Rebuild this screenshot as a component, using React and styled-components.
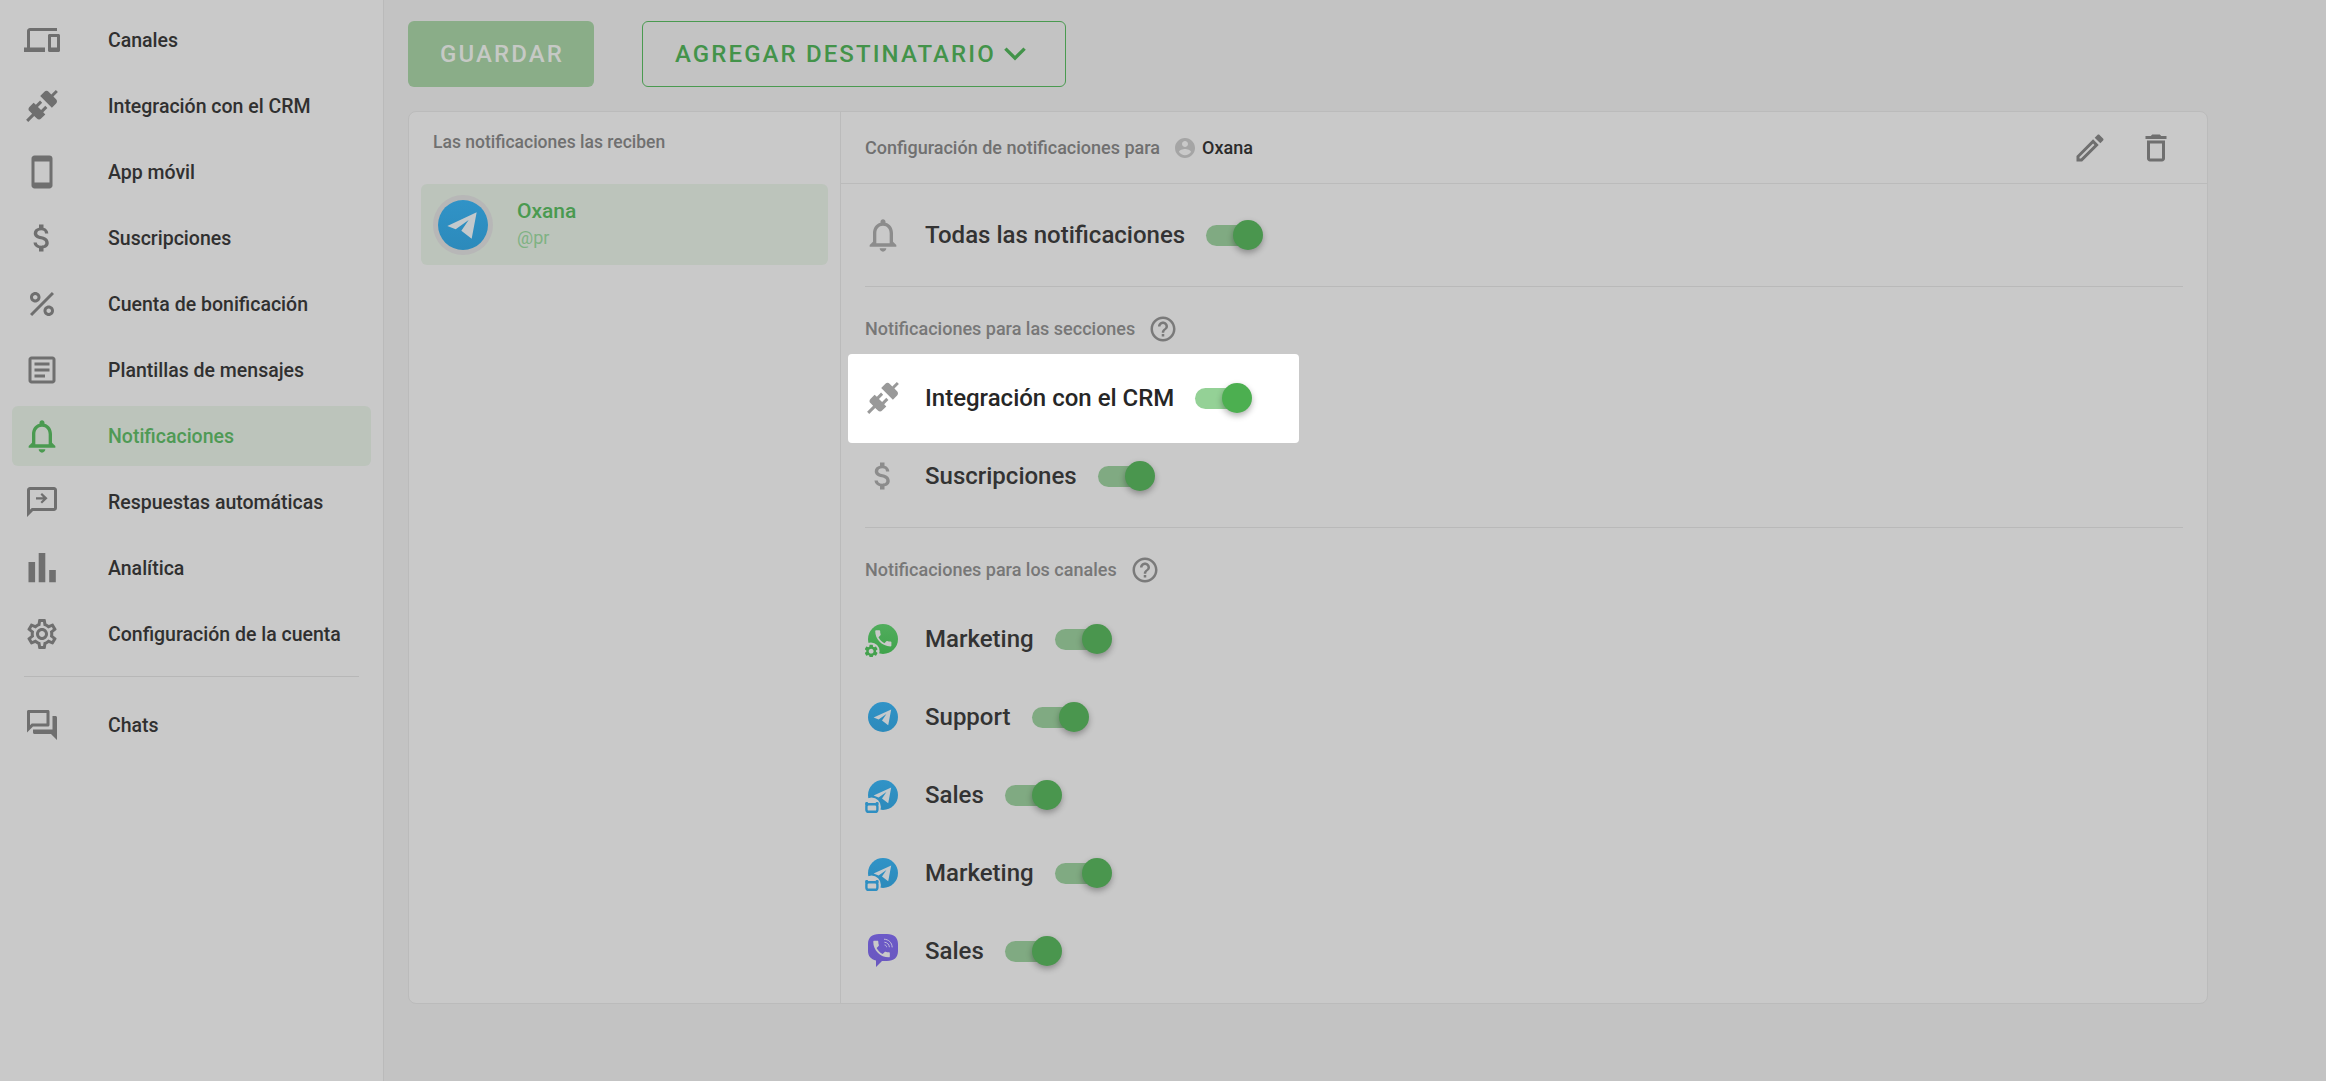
import React from "react";
import styled, { createGlobalStyle } from "styled-components";

const Global = createGlobalStyle`
  html, body { margin: 0; padding: 0; background: #c3c3c3; }
  body { font-family: Roboto, "Liberation Sans", sans-serif; overflow: hidden; }
`;

const P = {
  devices: "M4 6h18V4H4c-1.1 0-2 .9-2 2v11H0v3h14v-3H4V6zm19 2h-6c-.55 0-1 .45-1 1v10c0 .55.45 1 1 1h6c.55 0 1-.45 1-1V9c0-.55-.45-1-1-1zm-1 9h-4v-7h4v7z",
  plug: "M21.4 7.5C22.2 8.3 22.2 9.6 21.4 10.3L18.6 13.1L10.8 5.3L13.6 2.5C14.4 1.7 15.7 1.7 16.4 2.5L18.2 4.3L21.2 1.3L22.6 2.7L19.6 5.7L21.4 7.5M15.6 13.3L14.2 11.9L11.4 14.7L9.3 12.6L12.1 9.8L10.7 8.4L7.9 11.2L6.4 9.8L3.6 12.6C2.8 13.4 2.8 14.7 3.6 15.4L5.4 17.2L1.4 21.2L2.8 22.6L6.8 18.6L8.6 20.4C9.4 21.2 10.7 21.2 11.4 20.4L14.2 17.6L12.8 16.2L15.6 13.3Z",
  phone: "M17 1.01L7 1c-1.1 0-2 .9-2 2v18c0 1.1.9 2 2 2h10c1.1 0 2-.9 2-2V3c0-1.1-.9-1.99-2-1.99zM17 19H7V5h10v14z",
  money: "M11.8 10.9c-2.27-.59-3-1.2-3-2.15 0-1.09 1.01-1.85 2.7-1.85 1.78 0 2.44.85 2.5 2.1h2.21c-.07-1.72-1.12-3.3-3.21-3.81V3h-3v2.16c-1.94.42-3.5 1.68-3.5 3.61 0 2.31 1.91 3.46 4.7 4.13 2.5.6 3 1.48 3 2.41 0 .69-.49 1.79-2.7 1.79-2.06 0-2.87-.92-2.98-2.1h-2.2c.12 2.19 1.76 3.42 3.68 3.83V21h3v-2.15c1.95-.37 3.5-1.5 3.5-3.55 0-2.84-2.43-3.81-4.7-4.4z",
  percent: "M7.5 4C5.57 4 4 5.57 4 7.5S5.57 11 7.5 11 11 9.43 11 7.5 9.43 4 7.5 4zm0 5C6.67 9 6 8.33 6 7.5S6.67 6 7.5 6 9 6.67 9 7.5 8.33 9 7.5 9zm9 4c-1.93 0-3.5 1.57-3.5 3.5s1.57 3.5 3.5 3.5 3.5-1.57 3.5-3.5-1.57-3.5-3.5-3.5zm0 5c-.83 0-1.5-.67-1.5-1.5s.67-1.5 1.5-1.5 1.5.67 1.5 1.5-.67 1.5-1.5 1.5zM5.41 20L4 18.59 18.59 4 20 5.41 5.41 20z",
  article: "M19 5v14H5V5h14m0-2H5c-1.1 0-2 .9-2 2v14c0 1.1.9 2 2 2h14c1.1 0 2-.9 2-2V5c0-1.1-.9-2-2-2zM14 17H7v-2h7v2zm3-4H7v-2h10v2zm0-4H7V7h10v2z",
  bell: "M12 22c1.1 0 2-.9 2-2h-4c0 1.1.9 2 2 2zm6-6v-5c0-3.07-1.63-5.64-4.5-6.32V4c0-.83-.67-1.5-1.5-1.5s-1.5.67-1.5 1.5v.68C7.64 5.36 6 7.92 6 11v5l-2 2v1h16v-1l-2-2zm-2 1H8v-6c0-2.48 1.51-4.5 4-4.5s4 2.02 4 4.5v6z",
  reply: "M20 2H4c-1.1 0-2 .9-2 2v18l4-4h14c1.1 0 2-.9 2-2V4c0-1.1-.9-2-2-2zm0 14H5.17L4 17.17V4h16v12zM12 6l-1 1 1.7 1.75H8v1.5h4.7L11 12l1 1 3.7-3.5z",
  bars: "M3 8h4.4v13.5H3zM9.8 2h4.4v19.5H9.8zM16.8 13.3h4.4v8.2h-4.4z",
  gear: "M19.43 12.98c.04-.32.07-.64.07-.98 0-.34-.03-.66-.07-.98l2.11-1.65c.19-.15.24-.42.12-.64l-2-3.46c-.09-.16-.26-.25-.44-.25-.06 0-.12.01-.17.03l-2.49 1c-.52-.4-1.08-.73-1.69-.98l-.38-2.65C14.46 2.18 14.25 2 14 2h-4c-.25 0-.46.18-.49.42l-.38 2.65c-.61.25-1.17.59-1.69.98l-2.49-1c-.06-.02-.12-.03-.18-.03-.17 0-.34.09-.43.25l-2 3.46c-.13.22-.07.49.12.64l2.11 1.65c-.04.32-.07.65-.07.98 0 .33.03.66.07.98l-2.11 1.65c-.19.15-.24.42-.12.64l2 3.46c.09.16.26.25.44.25.06 0 .12-.01.17-.03l2.49-1c.52.4 1.08.73 1.69.98l.38 2.65c.03.24.24.42.49.42h4c.25 0 .46-.18.49-.42l.38-2.65c.61-.25 1.17-.59 1.69-.98l2.49 1c.06.02.12.03.18.03.17 0 .34-.09.43-.25l2-3.46c.12-.22.07-.49-.12-.64l-2.11-1.65zm-1.98-1.71c.04.31.05.52.05.73 0 .21-.02.43-.05.73l-.14 1.13.89.7 1.08.84-.7 1.21-1.27-.51-1.04-.42-.9.68c-.43.32-.84.56-1.25.73l-1.06.43-.16 1.13-.2 1.35h-1.4l-.19-1.35-.16-1.13-1.06-.43c-.43-.18-.83-.41-1.23-.71l-.91-.7-1.06.43-1.27.51-.7-1.21 1.08-.84.89-.7-.14-1.13c-.03-.31-.05-.54-.05-.74s.02-.43.05-.73l.14-1.13-.89-.7-1.08-.84.7-1.21 1.27.51 1.04.42.9-.68c.43-.32.84-.56 1.25-.73l1.06-.43.16-1.13.2-1.35h1.39l.19 1.35.16 1.13 1.06.43c.43.18.83.41 1.23.71l.91.7 1.06-.43 1.27-.51.7 1.21-1.07.85-.89.7.14 1.13zM12 8c-2.21 0-4 1.79-4 4s1.79 4 4 4 4-1.79 4-4-1.79-4-4-4zm0 6c-1.1 0-2-.9-2-2s.9-2 2-2 2 .9 2 2-.9 2-2 2z",
  chats: "M15 4v7H5.17L4 12.17V4h11m1-2H3c-.55 0-1 .45-1 1v14l4-4h10c.55 0 1-.45 1-1V3c0-.55-.45-1-1-1zm5 4h-2v9H6v2c0 .55.45 1 1 1h11l4 4V7c0-.55-.45-1-1-1z",
  edit: "M14.06 9.02l.92.92L5.92 19H5v-.92l9.06-9.06M17.66 3c-.25 0-.51.1-.7.29l-1.83 1.83 3.75 3.75 1.83-1.83c.39-.39.39-1.02 0-1.41l-2.34-2.34c-.2-.2-.45-.29-.71-.29zm-3.6 3.19L3 17.25V21h3.75L17.81 9.94l-3.75-3.75z",
  trash: "M16 9v10H8V9h8m-1.5-6h-5l-1 1H5v2h14V4h-3.5l-1-1zM18 7H6v12c0 1.1.9 2 2 2h8c1.1 0 2-.9 2-2V7z",
  help: "M11 18h2v-2h-2v2zm1-16C6.48 2 2 6.48 2 12s4.48 10 10 10 10-4.48 10-10S17.52 2 12 2zm0 18c-4.41 0-8-3.59-8-8s3.59-8 8-8 8 3.59 8 8-3.59 8-8 8zm0-14c-2.21 0-4 1.79-4 4h2c0-1.1.9-2 2-2s2 .9 2 2c0 2-3 1.75-3 5h2c0-2.25 3-2.5 3-5 0-2.21-1.79-4-4-4z",
  chevron: "M17.6 7.6L12 13.2 6.4 7.6 4.8 9.2 12 16.4 19.2 9.2z",
  account: "M12 2C6.48 2 2 6.48 2 12s4.48 10 10 10 10-4.48 10-10S17.52 2 12 2zm0 3c1.66 0 3 1.34 3 3s-1.34 3-3 3-3-1.34-3-3 1.34-3 3-3zm0 14.2c-2.5 0-4.71-1.28-6-3.22.03-1.99 4-3.08 6-3.08 1.99 0 5.97 1.09 6 3.08-1.29 1.94-3.5 3.22-6 3.22z",
  call: "M6.62 10.79c1.44 2.83 3.76 5.14 6.59 6.59l2.2-2.2c.27-.27.67-.36 1.02-.24 1.12.37 2.33.57 3.57.57.55 0 1 .45 1 1V20c0 .55-.45 1-1 1-9.39 0-17-7.61-17-17 0-.55.45-1 1-1h3.5c.55 0 1 .45 1 1 0 1.25.2 2.45.57 3.57.11.35.03.74-.25 1.02l-2.2 2.2z",
  cog: "M19.14 12.94c.04-.3.06-.61.06-.94 0-.32-.02-.64-.07-.94l2.03-1.58a.49.49 0 0 0 .12-.61l-1.92-3.32a.49.49 0 0 0-.59-.22l-2.39.96c-.5-.38-1.03-.7-1.62-.94l-.36-2.54a.48.48 0 0 0-.48-.41h-3.84c-.24 0-.43.17-.47.41l-.36 2.54c-.59.24-1.13.57-1.62.94l-2.39-.96c-.22-.08-.47 0-.59.22L2.74 8.87c-.12.21-.08.47.12.61l2.03 1.58c-.05.3-.09.63-.09.94s.02.64.07.94l-2.03 1.58a.49.49 0 0 0-.12.61l1.92 3.32c.12.22.37.29.59.22l2.39-.96c.5.38 1.03.7 1.62.94l.36 2.54c.05.24.24.41.48.41h3.84c.24 0 .44-.17.47-.41l.36-2.54c.59-.24 1.13-.56 1.62-.94l2.39.96c.22.08.47 0 .59-.22l1.92-3.32c.12-.22.07-.47-.12-.61l-2.01-1.58zM12 15.6c-1.98 0-3.6-1.62-3.6-3.6s1.62-3.6 3.6-3.6 3.6 1.62 3.6 3.6-1.62 3.6-3.6 3.6z",
};

const Page = styled.div`
  display: flex;
  height: 1081px;
  width: 2326px;
  background: #c3c3c3;
`;
const Sidebar = styled.nav`
  flex: none;
  height: 100%;
  background: #c9c9c9;
  border-right: 1px solid #bababa;
  padding-top: 10px;
  box-sizing: border-box;
  width: 384px;
  display: flex;
  flex-direction: column;
`;
const NavList = styled.div`
  display: flex;
  flex-direction: column;
  gap: 6px;
  padding: 0 12px 0 12px;
`;
const NavRow = styled.div`
  height: 60px;
  display: flex;
  align-items: center;
  gap: 48px;
  padding: 0 12px;
  border-radius: 6px;
  font-size: 19.5px;
  font-weight: 500;
  color: ${(p) => (p.$active ? "#4f9a55" : "#303030")};
  background: ${(p) => (p.$active ? "#bcc4bb" : "transparent")};
`;
const NavDivider = styled.div`
  height: 1px;
  background: #b7b7b7;
  margin: 12px 24px 18px;
`;
const Svg = styled.svg`
  flex: none;
  display: block;
  width: ${(p) => p.$size || 36}px;
  height: ${(p) => p.$size || 36}px;
  margin: ${(p) => (p.$bleed ? `-${p.$bleed}px` : 0)};
  fill: ${(p) => p.$color || "#6f6f6f"};
`;
const Icon = ({ d, size, color, bleed }) => (
  <Svg viewBox="0 0 24 24" $size={size} $color={color} $bleed={bleed}><path d={d} /></Svg>
);

const Main = styled.main`
  flex: 1;
  padding: 21px 0 0 24px;
  display: flex;
  flex-direction: column;
  gap: 24px;
`;
const Toolbar = styled.div`
  display: flex;
  gap: 48px;
  height: 66px;
`;
const SaveButton = styled.div`
  width: 186px;
  padding-left: 2px;
  box-sizing: border-box;
  border-radius: 6px;
  background: #8aad88;
  color: #c6c9c5;
  display: flex;
  align-items: center;
  justify-content: center;
  font-size: 24px;
  font-weight: 500;
  letter-spacing: 2.1px;
`;
const AddButton = styled.div`
  width: 424px;
  box-sizing: border-box;
  border-radius: 6px;
  border: 1.5px solid #4a9a50;
  color: #43934a;
  display: flex;
  align-items: center;
  padding-left: 32px;
  font-size: 24px;
  font-weight: 500;
  letter-spacing: 2.1px;
  gap: 1px;
`;
const Card = styled.section`
  width: 1800px;
  height: 893px;
  box-sizing: border-box;
  border: 1.5px solid #bbb;
  border-radius: 8px;
  background: #c9c9c9;
  display: flex;
`;
const LeftPanel = styled.div`
  width: 432px;
  flex: none;
  box-sizing: border-box;
  border-right: 1.5px solid #bbb;
  padding: 0 12px;
`;
const LeftTitle = styled.div`
  height: 72px;
  display: flex;
  align-items: center;
  padding: 0 12px 12px;
  box-sizing: border-box;
  color: #707070;
  font-size: 17.5px;
  font-weight: 500;
`;
const Recipient = styled.div`
  height: 81px;
  border-radius: 6px;
  background: #bcc4bb;
  display: flex;
  align-items: center;
  gap: 24px;
  padding: 0 12px;
`;
const AvatarRing = styled.div`
  width: 60px;
  height: 60px;
  border-radius: 50%;
  background: #b7b7b7;
`;
const RecipientText = styled.div`
  display: flex;
  flex-direction: column;
  gap: 3px;
`;
const RecipientName = styled.div`
  color: #4a9a50;
  font-size: 21px;
  font-weight: 500;
  line-height: 24px;
`;
const RecipientHandle = styled.div`
  color: #7fb283;
  font-size: 18px;
  line-height: 24px;
`;
const RightPanel = styled.div`
  flex: 1;
  display: flex;
  flex-direction: column;
  min-width: 0;
`;
const RightHeader = styled.header`
  height: 72px;
  flex: none;
  box-sizing: border-box;
  border-bottom: 1.5px solid #bbb;
  display: flex;
  align-items: center;
  padding: 0 33px 0 24px;
  font-size: 18px;
  font-weight: 500;
  color: #707070;
`;
const HeaderUser = styled.div`
  display: flex;
  align-items: center;
  gap: 5px;
  margin-left: 13px;
  color: #2b2b2b;
`;
const Actions = styled.div`
  display: flex;
  gap: 30px;
  margin-left: auto;
`;
const Body = styled.div`
  padding: 12px 24px 0;
  display: flex;
  flex-direction: column;
`;
const Row = styled.div`
  height: 78px;
  flex: none;
  display: flex;
  align-items: center;
  font-size: 24px;
  font-weight: 500;
  color: ${(p) => (p.$lit ? "#262626" : "#333")};
  ${(p) =>
    p.$lit &&
    `
    height: 89px;
    margin: -5.5px 0 -5.5px -17px;
    padding-left: 17px;
    padding-right: 47px;
    width: fit-content;
    background: #fff;
    border-radius: 4px;
    position: relative;
    z-index: 1;
  `}
`;
const RowIcon = styled.div`
  width: 36px;
  height: 36px;
  flex: none;
  margin-right: 24px;
`;
const Track = styled.div`
  width: 52px;
  height: 21px;
  border-radius: 11px;
  margin-left: 21px;
  margin-right: 5px;
  flex: none;
  display: flex;
  align-items: center;
  justify-content: flex-end;
  background: ${(p) => (p.$lit ? "#94d196" : "#80aa82")};
`;
const Thumb = styled.div`
  width: 30px;
  height: 30px;
  flex: none;
  margin-right: -5px;
  border-radius: 50%;
  background: ${(p) => (p.$lit ? "#4caf50" : "#4a964e")};
  box-shadow: 0 3px 6px rgba(0, 0, 0, 0.3);
`;
const Divider = styled.div`
  height: 1px;
  flex: none;
  background: #b9b9b9;
  margin: ${(p) => p.$m};
`;
const Label = styled.div`
  height: 25px;
  flex: none;
  display: flex;
  align-items: center;
  gap: 13px;
  margin-bottom: ${(p) => p.$mb}px;
  font-size: 18px;
  font-weight: 500;
  color: #777;
`;

const Bubble = ({ id, a, b, children, size = 36 }) => (
  <svg width={size} height={size} viewBox="0 0 36 36" style={{ display: "block" }}>
    <defs>
      <linearGradient id={id} x1="0" y1="0" x2="0" y2="1">
        <stop offset="0" stopColor={a} />
        <stop offset="1" stopColor={b} />
      </linearGradient>
    </defs>
    {children}
  </svg>
);
const PLANE = "M8.6 18.6 L26.2 10.4 L23.2 26.2 L17 21.4 L21.4 15 L13.6 20.6 Z";
const BotBadge = () => (
  <g>
    <circle cx="6.5" cy="30" r="9.4" fill="#c9c9c9" />
    <rect x="1.4" y="27.2" width="11" height="7.6" rx="2.4" fill="none" stroke="#2f8fc2" strokeWidth="2.4" />
    <rect x="0.2" y="25" width="3" height="3.4" rx="1.2" fill="#2f8fc2" />
    <rect x="10.6" y="25" width="3" height="3.4" rx="1.2" fill="#2f8fc2" />
  </g>
);
const Telegram = ({ id, bot, size }) => (
  <Bubble id={id} a="#3093c7" b="#2c8abb" size={size}>
    <circle cx="18" cy="18" r="15" fill={`url(#${id})`} />
    <path d={PLANE} fill="#c4c9cc" />
    {bot && <BotBadge />}
  </Bubble>
);
const WhatsApp = () => (
  <Bubble id="wa" a="#51ad5d" b="#3fa34b">
    <circle cx="18" cy="18" r="15" fill="url(#wa)" />
    <g transform="translate(7.5 6.5) scale(0.9)"><path d={P.call} fill="#c9c9c9" /></g>
    <circle cx="6" cy="30" r="8.6" fill="#c9c9c9" />
    <g transform="translate(-2 22) scale(0.68)"><path d={P.cog} fill="#43a14d" /></g>
  </Bubble>
);
const Viber = () => (
  <Bubble id="vb" a="#6c5ac8" b="#6a58bf">
    <path d="M14 1h8c7 0 11 3.6 11 10v7c0 6.4-4 10-11 10h-5l-6 6v-6.4C6 26.4 3 23 3 18v-7C3 4.6 7 1 14 1z" fill="url(#vb)" />
    <g transform="translate(5.5 5) scale(0.92)"><path d={P.call} fill="#c9c9c9" /></g>
    <path d="M19 6.2c4.6.2 8 3.4 8.2 8.2M19.4 9.2c2.8.2 4.8 2.2 5 5M19.6 12c1.2.1 1.9.9 2 2.2" fill="none" stroke="#c2bedb" strokeWidth="1" />
  </Bubble>
);

const NAV = [
  ["Canales", P.devices], ["Integración con el CRM", P.plug], ["App móvil", P.phone],
  ["Suscripciones", P.money], ["Cuenta de bonificación", P.percent], ["Plantillas de mensajes", P.article],
  ["Notificaciones", P.bell, true], ["Respuestas automáticas", P.reply], ["Analítica", P.bars],
  ["Configuración de la cuenta", P.gear],
];

const Toggle = ({ lit }) => (
  <Track $lit={lit}><Thumb $lit={lit} /></Track>
);
const SettingRow = ({ icon, label, lit }) => (
  <Row $lit={lit}>
    <RowIcon>{icon}</RowIcon>
    {label}
    <Toggle lit={lit} />
  </Row>
);

export default function App() {
  return (
    <>
      <Global />
      <Page>
        <Sidebar>
          <NavList>
            {NAV.map(([t, d, active]) => (
              <NavRow key={t} $active={active}>
                {active ? <Icon d={d} color="#4a9a50" size={40} bleed={2} /> : <Icon d={d} />}
                {t}
              </NavRow>
            ))}
          </NavList>
          <NavDivider />
          <NavList>
            <NavRow><Icon d={P.chats} />Chats</NavRow>
          </NavList>
        </Sidebar>
        <Main>
          <Toolbar>
            <SaveButton>GUARDAR</SaveButton>
            <AddButton>AGREGAR DESTINATARIO<Icon d={P.chevron} color="#43934a" /></AddButton>
          </Toolbar>
          <Card>
            <LeftPanel>
              <LeftTitle>Las notificaciones las reciben</LeftTitle>
              <Recipient>
                <AvatarRing><Telegram id="tga" size={60} /></AvatarRing>
                <RecipientText>
                  <RecipientName>Oxana</RecipientName>
                  <RecipientHandle>@pr</RecipientHandle>
                </RecipientText>
              </Recipient>
            </LeftPanel>
            <RightPanel>
              <RightHeader>
                Configuración de notificaciones para
                <HeaderUser><Icon d={P.account} size={24} color="#a5a5a5" />Oxana</HeaderUser>
                <Actions>
                  <Icon d={P.edit} />
                  <Icon d={P.trash} />
                </Actions>
              </RightHeader>
              <Body>
                <SettingRow icon={<Icon d={P.bell} color="#8c8c8c" size={40} bleed={2} />} label="Todas las notificaciones" />
                <Divider $m="12px 0 29px" />
                <Label $mb={18}>Notificaciones para las secciones<Icon d={P.help} size={30} color="#7a7a7a" /></Label>
                <SettingRow lit icon={<Icon d={P.plug} color="#999" />} label="Integración con el CRM" />
                <SettingRow icon={<Icon d={P.money} color="#8c8c8c" />} label="Suscripciones" />
                <Divider $m="12px 0 29px" />
                <Label $mb={18}>Notificaciones para los canales<Icon d={P.help} size={30} color="#7a7a7a" /></Label>
                <SettingRow icon={<WhatsApp />} label="Marketing" />
                <SettingRow icon={<Telegram id="tg1" />} label="Support" />
                <SettingRow icon={<Telegram id="tg2" bot />} label="Sales" />
                <SettingRow icon={<Telegram id="tg3" bot />} label="Marketing" />
                <SettingRow icon={<Viber />} label="Sales" />
              </Body>
            </RightPanel>
          </Card>
        </Main>
      </Page>
    </>
  );
}
